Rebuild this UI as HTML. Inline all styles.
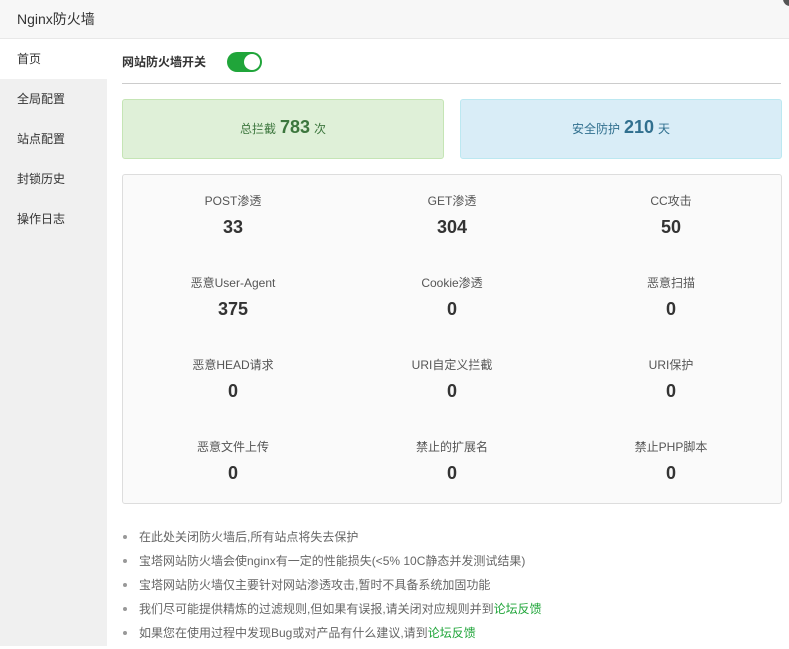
<!DOCTYPE html>
<html><head><meta charset="utf-8"><style>
*{margin:0;padding:0;box-sizing:border-box}
body{width:789px;height:646px;overflow:hidden;background:#fff;font-family:"Liberation Sans","Noto Sans CJK SC",sans-serif;color:#333;position:relative}
.hd{position:absolute;left:0;top:0;width:789px;height:39px;background:#f7f7f7;border-bottom:1px solid #e8e8e8;font-size:14px;line-height:38px;padding-left:17px;color:#333}
.close{position:absolute;right:-8px;top:-8px;width:14px;height:14px;border-radius:50%;background:#555;}
.sb{position:absolute;left:0;top:39px;width:107px;height:607px;background:#f0f0f0}
.sb div{height:40px;line-height:40px;padding-left:17px;font-size:12px;color:#333}
.sb .on{background:#fff}
.abs{position:absolute}
.sw{left:227px;top:52px;width:35px;height:20px;border-radius:10px;background:#20a53a}
.sw i{position:absolute;right:2px;top:2px;width:16px;height:16px;border-radius:50%;background:#fff}
.box{top:99px;height:60px;border-radius:3px;font-size:12px;text-align:center;line-height:54px}
.box b{font-size:18px;margin:0 4px}
.st{left:122px;top:174px;width:660px;height:330px;background:#fafafa;border:1px solid #ddd;border-radius:3px}
.c{position:absolute;width:200px;text-align:center}
.c p{font-size:12px;color:#555;height:16px;line-height:16px}
.c b{display:block;font-size:18px;color:#333;margin-top:8px;line-height:20px}
ul{position:absolute;left:122px;top:529px;list-style:none;font-size:12px;color:#666}
li{height:24px;line-height:16px;position:relative;padding-left:17px}
li:before{content:"";position:absolute;left:1px;top:6px;width:4px;height:4px;border-radius:50%;background:#999}
a{color:#20a53a;text-decoration:none}
</style></head><body>
<div class="hd">Nginx防火墙</div><div class="close"></div>
<div class="sb"><div class="on">首页</div><div>全局配置</div><div>站点配置</div><div>封锁历史</div><div>操作日志</div></div>
<div class="abs" style="left:122px;top:54px;font-size:12px;font-weight:bold;line-height:16px">网站防火墙开关</div>
<div class="abs sw"><i></i></div>
<div class="abs" style="left:122px;top:83px;width:659px;height:1px;background:#ccc"></div>
<div class="abs box" style="left:122px;width:322px;background:#dff0d8;border:1px solid #c5e5b5;color:#3c763d">总拦截<b>783</b>次</div>
<div class="abs box" style="left:460px;width:322px;background:#d9edf7;border:1px solid #bce8f1;color:#31708f">安全防护<b>210</b>天</div>
<div class="abs st">
<div class="c" style="left:10px;top:18px"><p>POST渗透</p><b>33</b></div>
<div class="c" style="left:229px;top:18px"><p>GET渗透</p><b>304</b></div>
<div class="c" style="left:448px;top:18px"><p>CC攻击</p><b>50</b></div>
<div class="c" style="left:10px;top:100px"><p>恶意User-Agent</p><b>375</b></div>
<div class="c" style="left:229px;top:100px"><p>Cookie渗透</p><b>0</b></div>
<div class="c" style="left:448px;top:100px"><p>恶意扫描</p><b>0</b></div>
<div class="c" style="left:10px;top:182px"><p>恶意HEAD请求</p><b>0</b></div>
<div class="c" style="left:229px;top:182px"><p>URI自定义拦截</p><b>0</b></div>
<div class="c" style="left:448px;top:182px"><p>URI保护</p><b>0</b></div>
<div class="c" style="left:10px;top:264px"><p>恶意文件上传</p><b>0</b></div>
<div class="c" style="left:229px;top:264px"><p>禁止的扩展名</p><b>0</b></div>
<div class="c" style="left:448px;top:264px"><p>禁止PHP脚本</p><b>0</b></div>
</div>
<ul>
<li>在此处关闭防火墙后,所有站点将失去保护</li>
<li>宝塔网站防火墙会使nginx有一定的性能损失(&lt;5% 10C静态并发测试结果)</li>
<li>宝塔网站防火墙仅主要针对网站渗透攻击,暂时不具备系统加固功能</li>
<li>我们尽可能提供精炼的过滤规则,但如果有误报,请关闭对应规则并到<a>论坛反馈</a></li>
<li>如果您在使用过程中发现Bug或对产品有什么建议,请到<a>论坛反馈</a></li>
</ul>
</body></html>
